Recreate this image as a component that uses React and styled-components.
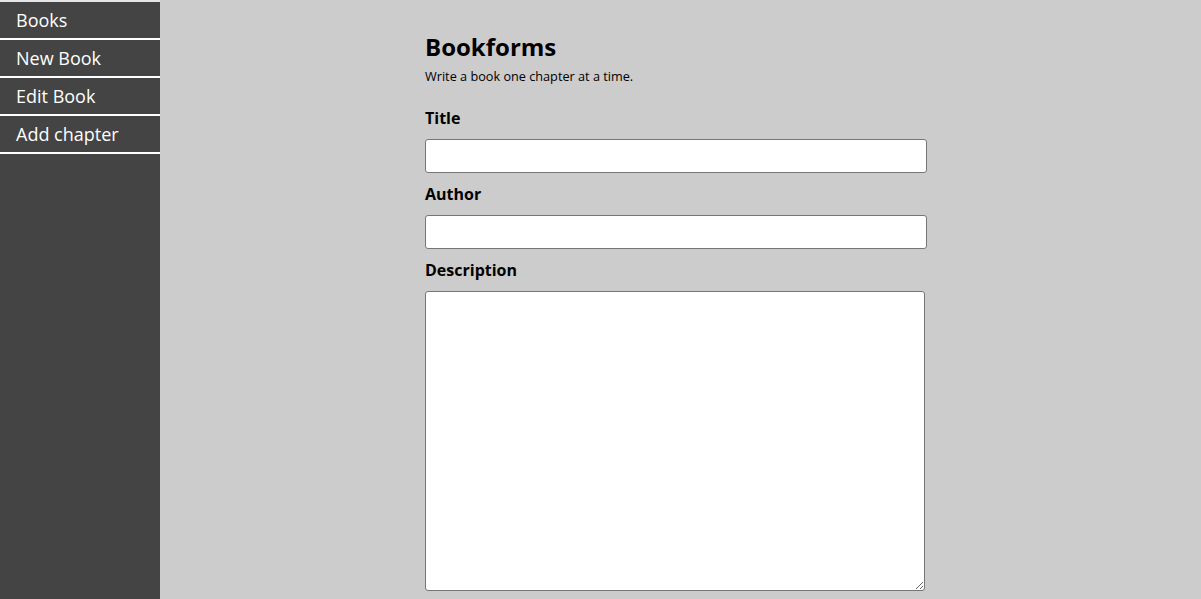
import * as React from "react";
import styled, { createGlobalStyle } from "styled-components";

const GlobalStyle = createGlobalStyle`
    html, body {
        margin: 0;
        padding: 0;
        height: 100%;
        background: #cccccc;
        font-family: "Open Sans", "Liberation Sans", sans-serif;
    }
`;

const navItems = ["Books", "New Book", "Edit Book", "Add chapter"];

const App = () => {
    return (
        <React.Fragment>
            <GlobalStyle />
            <Layout>
                <Sidebar>
                    <NavList>
                        {navItems.map((item) => (
                            <NavItem key={item}>{item}</NavItem>
                        ))}
                    </NavList>
                </Sidebar>

                <Main>
                    <Form>
                        <Heading>Bookforms</Heading>
                        <Tagline>Write a book one chapter at a time.</Tagline>

                        <Label>Title</Label>
                        <Input type="text" />

                        <Label>Author</Label>
                        <Input type="text" />

                        <Label>Description</Label>
                        <TextArea />
                    </Form>
                </Main>
            </Layout>
        </React.Fragment>
    );
};

export default App;

const Layout = styled.div`
    display: flex;
    height: 599px;
    overflow: hidden;
`;

const Sidebar = styled.nav`
    width: 160px;
    flex-shrink: 0;
    background-color: #444444;
    border-top: 2px solid #e6e6e6;
`;

const NavList = styled.div`
    display: flex;
    flex-direction: column;
`;

const NavItem = styled.div`
    height: 36px;
    line-height: 36px;
    padding-left: 16px;
    color: #ffffff;
    font-size: 18px;
    border-bottom: 2px solid #ffffff;
    cursor: pointer;
`;

const Main = styled.main`
    flex: 1;
    padding-left: 265px;
`;

const Form = styled.div`
    width: 502px;
    display: flex;
    flex-direction: column;
    padding-top: 31px;
`;

const Heading = styled.h1`
    margin: 0;
    font-size: 24px;
    line-height: 32px;
    font-weight: 700;
    color: #000;
`;

const Tagline = styled.p`
    margin: 4px 0 22px;
    font-size: 12.7px;
    line-height: 18px;
    color: #000;
`;

const Label = styled.label`
    font-size: 16px;
    font-weight: 700;
    line-height: 22px;
    margin-bottom: 10px;
    color: #000;
`;

const Input = styled.input`
    box-sizing: border-box;
    width: 502px;
    height: 34px;
    border: 1px solid #767676;
    border-radius: 3px;
    background: #fff;
    margin-bottom: 10px;
    font-family: inherit;
`;

const TextArea = styled.textarea`
    box-sizing: border-box;
    width: 500px;
    height: 300px;
    border: 1px solid #767676;
    border-radius: 3px;
    background: #fff;
    font-family: inherit;
`;
